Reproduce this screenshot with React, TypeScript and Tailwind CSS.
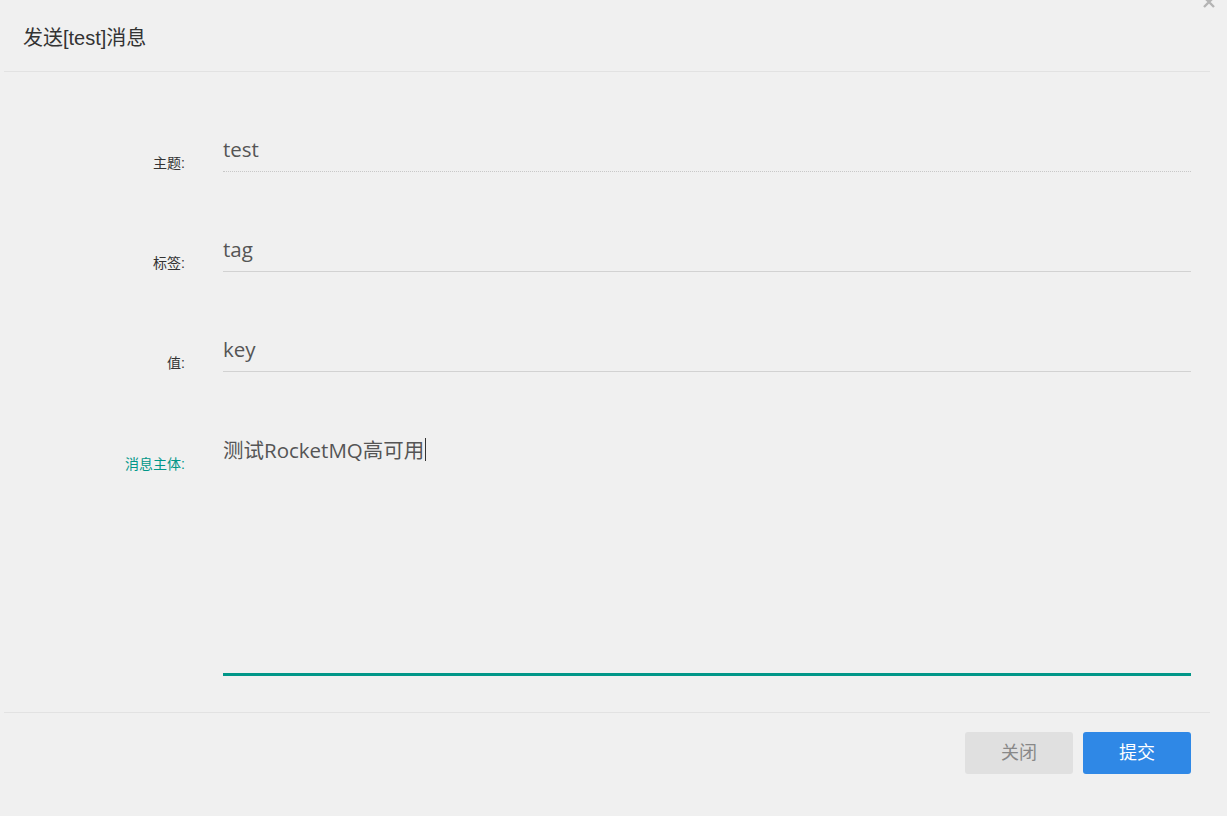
import React from "react";

const cjk = '"Noto Sans CJK SC", sans-serif';

function Row({ label, value, dotted }: { label: string; value: string; dotted?: boolean }) {
  return (
    <div className="flex items-end">
      <div className="w-[181px] shrink-0 text-right text-[14px] leading-[17px] text-[#333]">
        {label}:
      </div>
      <div className="ml-[38px] flex-1">
        <div
          className={
            "h-[40px] leading-[35px] text-[20.5px] text-[#555] border-b " +
            (dotted ? "border-dotted border-[#c8c8c8]" : "border-solid border-[#d2d2d2]")
          }
          style={{ fontFamily: '"Open Sans", ' + cjk }}
        >
          {value}
        </div>
      </div>
    </div>
  );
}

export default function App() {
  return (
    <div
      className="relative w-[1227px] h-[816px] bg-[#f0f0f0] overflow-hidden"
      style={{ fontFamily: '"Liberation Sans", ' + cjk }}
    >
      <svg
        className="absolute left-[1202px] top-[-5px]"
        width="14"
        height="14"
        viewBox="0 0 14 14"
        aria-label="close"
      >
        <path d="M2 2 L12 12 M12 2 L2 12" stroke="#b4b4b4" strokeWidth="2.4" strokeLinecap="butt" />
      </svg>
      <div className="ml-[4px] mr-[17px]">
        <div className="h-[72px] border-b border-[#e2e2e2] pl-[19px] flex items-center">
          <span className="text-[20px] text-[#333] pt-[4px]">发送[test]消息</span>
        </div>
        <div className="pt-[60px] pr-[19px] flex flex-col gap-[60px]">
          <Row label="主题" value="test" dotted />
          <Row label="标签" value="tag" />
          <Row label="值" value="key" />
          <div className="flex items-start">
            <div className="w-[181px] shrink-0 text-right text-[14px] leading-[20px] text-[#009688] pt-[22px]">
              消息主体:
            </div>
            <div className="ml-[38px] flex-1">
              <div
                className="h-[244px] leading-[36px] text-[20.5px] text-[#555] border-b-[3px] border-[#009688]"
                style={{ fontFamily: '"Open Sans", ' + cjk }}
              >
                测试RocketMQ高可用
                <span className="inline-block w-[1px] h-[23px] bg-[#333] align-middle ml-[1px] -mt-[6px]" />
              </div>
            </div>
          </div>
        </div>
        <div className="mt-[36px] border-t border-[#e2e2e2] pt-[19px] pr-[19px] flex justify-end gap-[10px]">
          <button className="w-[108px] h-[42px] rounded-[3px] bg-[#e0e0e0] text-[#888] text-[18px]">关闭</button>
          <button className="w-[108px] h-[42px] rounded-[3px] bg-[#2f88e6] text-white text-[18px]">提交</button>
        </div>
      </div>
    </div>
  );
}
